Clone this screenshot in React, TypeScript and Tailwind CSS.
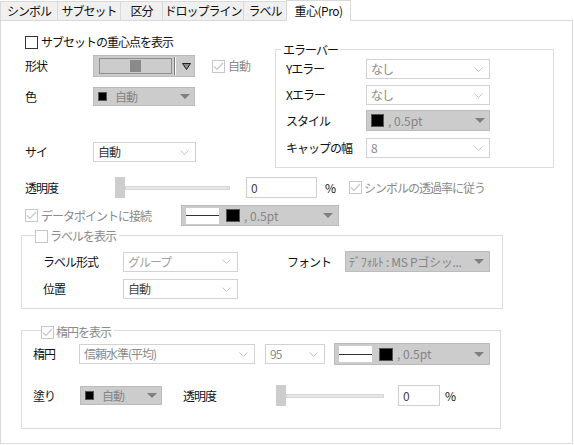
import React from 'react';

const FONT = "font-['Noto_Sans_CJK_JP','Noto_Sans',sans-serif]";

const Check = ({ checked = false, disabled = false }: { checked?: boolean; disabled?: boolean }) => (
  <span
    className={`flex h-[13px] w-[13px] shrink-0 items-center justify-center border bg-white ${
      disabled ? 'border-[#c6c6c6]' : 'border-[#333333]'
    }`}
  >
    {checked && (
      <svg width="11" height="9" viewBox="0 0 11 9">
        <polyline points="1,4.5 4,7.5 10,1" fill="none" stroke="#c6c6c6" strokeWidth="1.2" />
      </svg>
    )}
  </span>
);

const Chevron = () => (
  <svg width="9" height="5" viewBox="0 0 9 5" className="shrink-0">
    <polyline points="0.5,0.5 4.5,4.5 8.5,0.5" fill="none" stroke="#c4c4c4" strokeWidth="1" />
  </svg>
);

const Tri = () => (
  <svg width="10" height="5" viewBox="0 0 10 5" className="shrink-0">
    <polygon points="0,0 10,0 5,5" fill="#7f7f7f" />
  </svg>
);

const WhiteCombo = ({ w, h, text, color }: { w: string; h: string; text: string; color: string }) => (
  <div className={`flex ${w} ${h} shrink-0 items-center justify-between border border-[#d2d2d2] bg-white pl-[4px] pr-[6px]`}>
    <span className={`${color} leading-none`}>{text}</span>
    <Chevron />
  </div>
);

const ColorCombo = ({ w, h, sq, text, textClass }: { w: string; h: string; sq: string; text: string; textClass: string }) => (
  <div className={`flex ${w} ${h} shrink-0 items-center border border-[#bcbcbc] bg-[#cccccc] pl-[4px] pr-[4px]`}>
    <span className={`${sq} shrink-0 border border-[#555] bg-black`} />
    <span className={`${textClass} flex-1 leading-none text-[#858585]`}>{text}</span>
    <Tri />
  </div>
);

const LineCombo = ({ w, h }: { w: string; h: string }) => (
  <div className={`flex ${w} ${h} shrink-0 items-center border border-[#bcbcbc] bg-[#cccccc] pl-[4px] pr-[5px]`}>
    <span className="flex h-[16px] w-[33px] shrink-0 items-center bg-white">
      <span className="h-px w-full bg-[#333]" />
    </span>
    <span className="ml-[7px] h-[13px] w-[14px] shrink-0 border border-[#555] bg-black" />
    <span className="ml-[4px] flex-1 leading-none tracking-normal text-[#858585]">, 0.5pt</span>
    <Tri />
  </div>
);

const Slider = ({ track }: { track: string }) => (
  <div className="flex items-center">
    <span className="h-[21px] w-[10px] bg-[#cdcdcd]" />
    <span className={`h-[4px] ${track} border border-[#d6d6d6] bg-[#e6e8e7]`} />
  </div>
);

const Tab = ({ label, w }: { label: string; w: string }) => (
  <div className={`mt-[1px] flex h-[19px] ${w} items-center justify-center border-l border-t border-[#d9d9d9] bg-[#f0f0f0]`}>
    {label}
  </div>
);

export default function App() {
  return (
    <div className={`${FONT} h-[445px] w-[574px] whitespace-nowrap bg-white text-[12px] tracking-[-1px] text-[#111]`}>
      <div className="relative z-10 flex h-[21px] items-start">
        <Tab label="シンボル" w="w-[57px]" />
        <Tab label="サブセット" w="w-[63px]" />
        <Tab label="区分" w="w-[42px]" />
        <Tab label="ドロップライン" w="w-[81px]" />
        <Tab label="ラベル" w="w-[43px]" />
        <div className="flex h-[21px] w-[65px] items-start justify-center border-l border-r border-t border-[#d9d9d9] bg-white pt-[1px] tracking-[-0.5px]">
          重心(Pro)
        </div>
      </div>

      <div className="-mt-px h-[424px] w-[573px] border border-[#d9d9d9] pl-[20px]">
        {/* top section */}
        <div className="flex">
          <div className="w-[254px] pl-[4px]">
            <div className="mt-[14px] flex h-[14px] items-center">
              <Check />
              <span className="ml-[3px]">サブセットの重心点を表示</span>
            </div>
            <div className="mt-[6px] flex h-[22px] items-center">
              <span className="w-[68px]">形状</span>
              <div className="flex h-[22px] w-[102px] items-center border border-[#bcbcbc] bg-[#cccccc] pl-[5px]">
                <span className="flex h-[16px] w-[73px] items-center justify-center border border-[#8e8e8e]">
                  <span className="h-[12px] w-[11px] bg-[#8a8a8a]" />
                </span>
                <span className="ml-[2px] h-[18px] w-px bg-[#7a7a7a]" />
                <span className="h-[18px] w-px bg-white" />
                <svg width="9" height="7" viewBox="0 0 9 7" className="ml-[6px]">
                  <polygon points="0.5,0.5 8.5,0.5 4.5,6.5" fill="#8a8a8a" stroke="#222" strokeWidth="1" />
                </svg>
              </div>
              <span className="ml-[17px] flex items-center">
                <Check checked disabled />
                <span className="ml-[3px] text-[#8a8a8a]">自動</span>
              </span>
            </div>
            <div className="mt-[10px] flex h-[19px] items-center">
              <span className="w-[68px]">色</span>
              <ColorCombo w="w-[102px]" h="h-[19px]" sq="h-[9px] w-[9px]" text="自動" textClass="ml-[8px]" />
            </div>
            <div className="mt-[36px] flex h-[20px] items-center">
              <span className="w-[68px]">サイ</span>
              <WhiteCombo w="w-[103px]" h="h-[20px]" text="自動" color="text-[#333]" />
            </div>
          </div>

          <div className="relative mt-[28px] h-[119px] w-[279px] border border-[#dcdcdc] pl-[10px] pt-[9px]">
            <span className="absolute -top-[9px] left-[5px] bg-white px-[2px]">エラーバー</span>
            <div className="flex h-[20px] items-center">
              <span className="w-[80px]">Yエラー</span>
              <WhiteCombo w="w-[124px]" h="h-[20px]" text="なし" color="text-[#8a8a8a]" />
            </div>
            <div className="mt-[6px] flex h-[20px] items-center">
              <span className="w-[80px]">Xエラー</span>
              <WhiteCombo w="w-[124px]" h="h-[20px]" text="なし" color="text-[#8a8a8a]" />
            </div>
            <div className="mt-[5px] flex h-[21px] items-center">
              <span className="w-[80px]">スタイル</span>
              <ColorCombo w="w-[124px]" h="h-[21px]" sq="h-[13px] w-[13px]" text=", 0.5pt" textClass="ml-[4px] tracking-normal" />
            </div>
            <div className="mt-[7px] flex h-[20px] items-center">
              <span className="w-[80px]">キャップの幅</span>
              <WhiteCombo w="w-[124px]" h="h-[20px]" text="8" color="text-[#8a8a8a]" />
            </div>
          </div>
        </div>

        {/* transparency */}
        <div className="mt-[9px] flex h-[21px] items-center pl-[4px]">
          <span className="w-[90px]">透明度</span>
          <Slider track="w-[105px]" />
          <div className="ml-[16px] flex h-[21px] w-[71px] items-center border border-[#cfcfcf] pl-[4px] text-[#444]">0</div>
          <span className="ml-[8px]">%</span>
          <span className="ml-[14px] flex items-center">
            <Check checked disabled />
            <span className="ml-[2px] text-[#8a8a8a]">シンボルの透過率に従う</span>
          </span>
        </div>

        {/* connect */}
        <div className="mt-[7px] flex h-[21px] items-center pl-[4px]">
          <span className="flex w-[156px] items-center">
            <Check checked disabled />
            <span className="ml-[3px] text-[#8a8a8a]">データポイントに接続</span>
          </span>
          <LineCombo w="w-[158px]" h="h-[21px]" />
        </div>

        {/* label group */}
        <div className="relative mt-[9px] h-[74px] w-[482px] border border-[#dcdcdc] pl-[21px] pt-[15px]">
          <span className="absolute -top-[9px] left-[13px] flex items-center bg-white pr-[3px]">
            <Check disabled />
            <span className="ml-[2px] text-[#8a8a8a]">ラベルを表示</span>
          </span>
          <div className="flex h-[21px] items-center">
            <span className="w-[80px]">ラベル形式</span>
            <WhiteCombo w="w-[115px]" h="h-[20px]" text="グループ" color="text-[#a0a0a0]" />
            <span className="ml-[49px] w-[58px]">フォント</span>
            <div className="flex h-[21px] w-[145px] items-center justify-between overflow-hidden border border-[#bcbcbc] bg-[#cccccc] pl-[3px] pr-[5px]">
              <span className="leading-none tracking-[-0.3px] text-[#858585]">ﾃﾞﾌｫﾙﾄ : MS Pゴシッ...</span>
              <Tri />
            </div>
          </div>
          <div className="mt-[7px] flex h-[20px] items-center">
            <span className="w-[80px]">位置</span>
            <WhiteCombo w="w-[115px]" h="h-[20px]" text="自動" color="text-[#444]" />
          </div>
        </div>

        {/* ellipse group */}
        <div className="relative mt-[21px] h-[99px] w-[480px] border border-[#dcdcdc] pl-[11px] pt-[12px]">
          <span className="absolute -top-[8px] left-[19px] flex items-center bg-white pr-[3px]">
            <Check checked disabled />
            <span className="ml-[2px] text-[#8a8a8a]">楕円を表示</span>
          </span>
          <div className="flex h-[22px] items-center">
            <span className="w-[46px]">楕円</span>
            <WhiteCombo w="w-[176px]" h="h-[20px]" text="信頼水準(平均)" color="text-[#8a8a8a]" />
            <span className="ml-[10px]">
              <WhiteCombo w="w-[60px]" h="h-[20px]" text="95" color="text-[#8a8a8a]" />
            </span>
            <span className="ml-[9px]">
              <LineCombo w="w-[156px]" h="h-[22px]" />
            </span>
          </div>
          <div className="mt-[19px] flex h-[23px] items-center">
            <span className="w-[47px]">塗り</span>
            <ColorCombo w="w-[82px]" h="h-[19px]" sq="h-[9px] w-[9px]" text="自動" textClass="ml-[8px]" />
            <span className="ml-[21px] w-[93px]">透明度</span>
            <Slider track="w-[98px]" />
            <div className="ml-[14px] flex h-[21px] w-[42px] items-center border border-[#cfcfcf] pl-[4px] text-[#444]">0</div>
            <span className="ml-[5px]">%</span>
          </div>
        </div>
      </div>
    </div>
  );
}
